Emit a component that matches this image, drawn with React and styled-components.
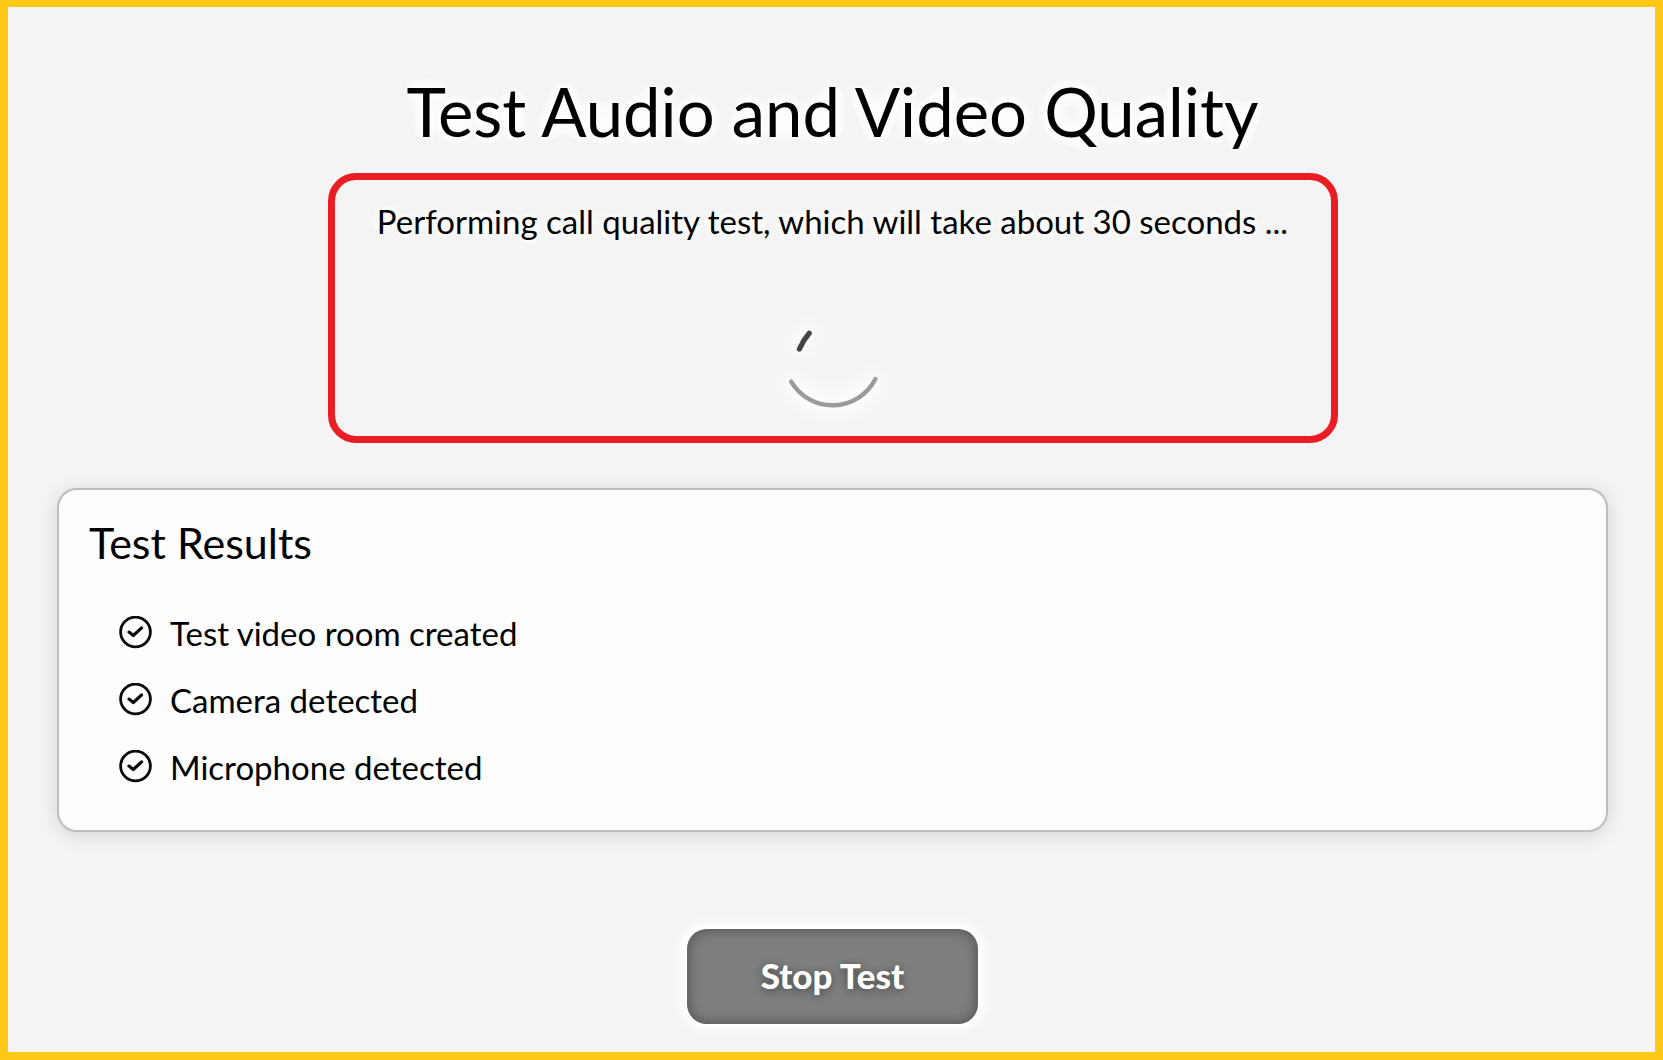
import React from "react";
import styled, { createGlobalStyle } from "styled-components";

const results = [
  "Test video room created",
  "Camera detected",
  "Microphone detected",
];

// layered so the halo stays solid white close to the letters
const halo = (blur) => Array(24).fill(`0 0 ${blur}px #fff`).join(", ");

const CheckIcon = () => (
  <svg width="33" height="33" viewBox="0 0 33 33" fill="none" aria-hidden="true">
    <circle cx="16.5" cy="16" r="14.9" stroke="#0a0a0a" strokeWidth="2.8" />
    <path
      d="M10 16.1 L14.3 19.5 L22.6 11.9"
      stroke="#0a0a0a"
      strokeWidth="3.2"
      strokeLinecap="round"
      strokeLinejoin="round"
    />
  </svg>
);

const App = () => {
  return (
    <Page>
      <GlobalStyle />
      <Title>Test Audio and Video Quality</Title>
      <Progress role="status">
        <p>Performing call quality test, which will take about 30 seconds ...</p>
        <Spinner viewBox="0 0 100 100" aria-hidden="true">
          <path d="M8.2 73.6 A48 48 0 0 0 92.4 71" stroke="#9b9b9b" />
          <path d="M16.4 41 A60 60 0 0 1 26.2 25.2" stroke="#444" />
        </Spinner>
      </Progress>
      <Results>
        <h2>Test Results</h2>
        <ul>
          {results.map((result) => (
            <li key={result}>
              <CheckIcon />
              {result}
            </li>
          ))}
        </ul>
      </Results>
      <StopButton type="button">Stop Test</StopButton>
    </Page>
  );
};

const GlobalStyle = createGlobalStyle`
  * {
    box-sizing: border-box;
    margin: 0;
    padding: 0;
  }
  body {
    background-color: #f4f4f4;
    color: #000;
    font-family: Lato, "Open Sans", sans-serif;
    font-size: 33px;
    line-height: 40px;
  }
`;

const Page = styled.main`
  display: flex;
  flex-direction: column;
  align-items: center;
  min-height: 100vh;
  padding: 64px 47px 24px 49px;
  border: 8px solid #ffc91a;
  border-top-width: 7px;
`;

const Title = styled.h1`
  font-size: 67px;
  font-weight: 400;
  line-height: 80px;
  text-align: center;
  text-shadow: ${halo(16)};
`;

const Progress = styled.section`
  display: flex;
  flex-direction: column;
  align-items: center;
  gap: 67px;
  width: 100%;
  max-width: 1010px;
  margin-top: 22px;
  padding: 21px 24px 28px;
  border: 7px solid #ea1c24;
  border-radius: 28px;
  text-align: center;
  p {
    text-shadow: ${halo(16)};
  }
`;

const Spinner = styled.svg`
  width: 100px;
  height: 100px;
  overflow: visible;
  filter: drop-shadow(0 0 6px #fff) drop-shadow(0 0 8px #fff)
    drop-shadow(0 0 10px #fff);
  path {
    fill: none;
    stroke-width: 4.4;
    stroke-linecap: round;
  }
  path:last-child {
    stroke-width: 5.2;
  }
`;

const Results = styled.section`
  width: 100%;
  margin-top: 45px;
  padding: 29px 30px 30px;
  background-color: #fdfdfd;
  border: 2px solid #bdbdbd;
  border-radius: 20px;
  box-shadow: 0 3px 20px rgba(0, 0, 0, 0.13);
  h2 {
    font-size: 43px;
    font-weight: 400;
    line-height: 48px;
  }
  ul {
    margin-top: 32px;
    padding-left: 30px;
    list-style: none;
  }
  li {
    display: flex;
    align-items: center;
    gap: 18px;
    min-height: 67px;
  }
`;

const StopButton = styled.button`
  min-width: 291px;
  height: 95px;
  margin-top: 97px;
  padding: 0 72px 4px;
  background-color: #7e7e7e;
  border: none;
  border-radius: 20px;
  box-shadow: inset 0 0 14px rgba(0, 0, 0, 0.4), 0 0 8px 7px #fff;
  color: #fff;
  font-family: inherit;
  font-size: 35px;
  font-weight: 900;
  text-shadow: 0 2px 10px rgba(0, 0, 0, 0.45);
  cursor: pointer;
`;

export default App;
